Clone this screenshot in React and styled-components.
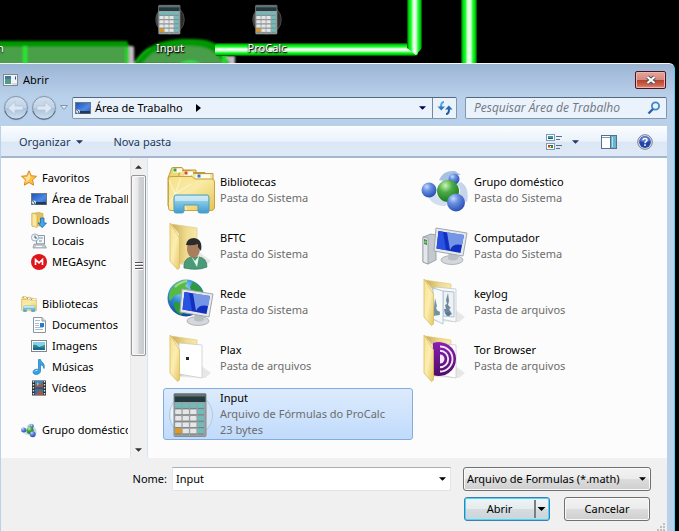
import React from "react";
import styled, { createGlobalStyle, css } from "styled-components";

const Global = createGlobalStyle`
  *, *::before, *::after { box-sizing: border-box; }
  body {
    margin: 0;
    background: #000;
    color: #000;
    font-family: "Noto Sans", "Open Sans", sans-serif;
    font-size: 11px;
    line-height: 16px;
  }
  button, input, select { font: inherit; color: inherit; margin: 0; }
  svg { display: block; flex: none; }
`;

/* ---------- page ---------- */

const Page = styled.div`
  min-height: 100vh;
  display: flex;
  flex-direction: column;
  overflow: hidden;
`;

const Desktop = styled.header`
  position: relative;
  height: 63px;
  display: flex;
  gap: 25px;
  padding-left: 134px;
  overflow: hidden;
`;

const Wallpaper = styled.svg`
  position: absolute;
  left: 0;
  top: 0;
`;

const Shortcut = styled.a`
  position: relative;
  width: 72px;
  padding-top: 3px;
  display: flex;
  flex-direction: column;
  align-items: center;
  gap: 5px;
  color: #fff;
  text-decoration: none;
  text-shadow: 0 1px 2px #000, 1px 1px 1px #000;
`;

const ClippedLabel = styled.span`
  position: absolute;
  left: -3px;
  top: 40px;
  color: #fff;
  text-shadow: 0 1px 2px #000;
`;

/* ---------- dialog frame ---------- */

const Dialog = styled.main`
  flex: 1;
  margin-right: 4px;
  padding: 0 7px 0 1px;
  display: flex;
  flex-direction: column;
  border-top: 1px solid #f4f8fc;
  border-right: 1px solid #3fd6f5;
  border-radius: 0 6px 0 0;
  background: linear-gradient(#9ab4d1, #a9c1de 14px, #b9d1ea 34px);
`;

const TitleBar = styled.div`
  height: 32px;
  padding: 0 1px 0 2px;
  display: flex;
  align-items: center;
  gap: 4px;
`;

const Title = styled.h1`
  flex: 1;
  margin: 0;
  font-size: 11px;
  font-weight: 400;
`;

const CloseButton = styled.button`
  width: 31px;
  height: 18px;
  padding: 0;
  display: grid;
  place-items: center;
  border: 1px solid #4d1420;
  border-radius: 2px;
  background: linear-gradient(#e2a59c, #d68a7e 48%, #b8402a 50%, #c9614c 80%, #dc8d7a);
  box-shadow: inset 0 0 0 1px #eab8ae;
`;

const NavRow = styled.div`
  display: flex;
  align-items: center;
  height: 24px;
`;

const NavButtons = styled.div`
  width: 71px;
  display: flex;
  align-items: center;
`;

const RoundButton = styled.button`
  width: 28px;
  height: 26px;
  padding: 0;
  border: 0;
  background: none;
`;

const HistoryButton = styled.button`
  flex: 1;
  padding: 0 0 0 3px;
  border: 0;
  background: none;
`;

const field = css`
  height: 22px;
  display: flex;
  align-items: center;
  border: 1px solid #8296ae;
  border-top-color: #56677c;
  border-radius: 2px;
  background: #eaf2fb;
`;

const AddressBar = styled.div`
  ${field}
  flex: 1;
  min-width: 0;
  padding-left: 2px;
`;

const Crumb = styled.button`
  flex: 1;
  padding: 0;
  display: flex;
  align-items: center;
  gap: 4px;
  border: 0;
  background: none;
  text-align: left;
  white-space: nowrap;
`;

const CrumbArrow = styled.span`
  padding-left: 9px;
`;

const AddressButton = styled.button`
  width: ${(p) => (p.$divided ? "24px" : "20px")};
  height: 20px;
  padding: 0;
  display: grid;
  place-items: center;
  border: 0;
  border-left: ${(p) => (p.$divided ? "1px solid #7389a3" : "0")};
  background: none;
`;

const SearchBox = styled.div`
  ${field}
  width: 202px;
  margin-left: 8px;
  padding: 0 5px 0 8px;
`;

const SearchInput = styled.input`
  flex: 1;
  min-width: 0;
  padding: 0;
  border: 0;
  outline: 0;
  background: none;
  font-family: "Open Sans", "Noto Sans", sans-serif;
  font-size: 12px;
  font-style: italic;
  &::placeholder { color: #6f7780; opacity: 1; }
`;

const IconButton = styled.button`
  padding: 0;
  border: 0;
  background: none;
`;

/* ---------- toolbar ---------- */

const Toolbar = styled.div`
  height: 32px;
  margin-top: 6px;
  padding: 0 14px 0 18px;
  display: flex;
  align-items: center;
  border-top: 1px solid #fff;
  border-bottom: 2px solid #a3b7d1;
  background: linear-gradient(#fafcff, #eaf2fb 48%, #dce7f5 52%, #dfe9f6);
  color: #1e395b;
`;

const ToolbarButton = styled.button`
  margin-right: 30px;
  padding: 0;
  display: flex;
  align-items: center;
  gap: 6px;
  border: 0;
  background: none;
`;

const ToolbarIcons = styled.div`
  margin-left: auto;
  display: flex;
  align-items: center;
  gap: 20px;
`;

const ViewButton = styled.button`
  padding: 0 2px 0 0;
  display: flex;
  align-items: center;
  gap: 10px;
  border: 0;
  background: none;
`;

/* ---------- body ---------- */

const Body = styled.div`
  height: 300px;
  display: flex;
  background: #fcfcfc;
`;

const Sidebar = styled.nav`
  width: 129px;
  padding: 9px 2px 0 0;
`;

const Group = styled.ul`
  margin: 0 0 21px;
  padding: 0;
  overflow: hidden;
  list-style: none;
`;

const Place = styled.a`
  height: 21px;
  padding-left: ${(p) => (p.$child ? "30px" : "20px")};
  display: flex;
  align-items: center;
  gap: 5px;
  color: #000;
  text-decoration: none;
  white-space: nowrap;
`;

const Scrollbar = styled.div`
  width: 18px;
  display: flex;
  flex-direction: column;
  border-left: 1px solid #e6e6e6;
  border-right: 1px solid #d6e5f5;
  padding-right: 1px;
  background: #f0f0f0;
`;

const ScrollButton = styled.button`
  height: 17px;
  padding: 0;
  display: grid;
  place-items: center;
  border: 0;
  background: none;
`;

const Thumb = styled.div`
  height: 181px;
  margin-bottom: auto;
  display: grid;
  place-items: center;
  border: 1px solid #979797;
  border-radius: 2px;
  background: linear-gradient(90deg, #f6f6f6, #e6e6e8 48%, #d2d3d6 52%, #c8c9cc);
  box-shadow: inset 0 0 0 1px #f8f8f8;
`;

const FileGrid = styled.div`
  flex: 1;
  padding: 6px 0 0 15px;
  display: grid;
  grid-template-columns: 250px 250px;
  grid-auto-rows: 52px;
  gap: 4px;
  overflow: hidden;
`;

const FileItem = styled.button`
  min-width: 0;
  padding: 0 3px;
  display: flex;
  align-items: center;
  gap: 5px;
  text-align: left;
  border: 1px solid ${(p) => (p.$selected ? "#84acdd" : "transparent")};
  border-radius: 3px;
  background: ${(p) => (p.$selected ? "linear-gradient(#dcebfc, #c1dbfc)" : "none")};
`;

const FileText = styled.span`
  display: flex;
  flex-direction: column;
  white-space: nowrap;
`;

const Detail = styled.span`
  color: #6d6d6d;
`;

/* ---------- footer ---------- */

const Footer = styled.form`
  flex: 1;
  position: relative;
  padding: 9px 16px 9px 0;
  display: flex;
  flex-direction: column;
  gap: 6px;
  background: #f0f0f0;
`;

const NameRow = styled.div`
  display: flex;
  align-items: center;
`;

const NameLabel = styled.label`
  width: 166px;
  text-align: right;
`;

const Combo = styled.div`
  flex: 1;
  min-width: 0;
  height: 24px;
  margin: 0 12px 0 5px;
  padding: 0 4px 0 3px;
  display: flex;
  align-items: center;
  border: 1px solid #e2e6ec;
  border-top-color: #abadb3;
  background: #fff;
`;

const NameInput = styled.input`
  flex: 1;
  min-width: 0;
  padding: 0;
  border: 0;
  outline: 0;
  background: none;
`;

const raised = css`
  height: 24px;
  border: 1px solid #707070;
  border-radius: 3px;
  background: linear-gradient(#f3f3f3, #ebebeb 48%, #dcdcdc 52%, #cfcfcf);
  box-shadow: inset 0 0 0 1px #fafafa;
`;

const FilterBox = styled.div`
  display: grid;
  align-items: center;
  width: 188px;
  & > * { grid-area: 1 / 1; }
  & > svg { justify-self: end; margin-right: 5px; pointer-events: none; }
`;

const FilterSelect = styled.select`
  ${raised}
  width: 100%;
  padding: 0 14px 0 3px;
  appearance: none;
`;

const ButtonRow = styled.div`
  display: flex;
  justify-content: flex-end;
  gap: 14px;
  padding-right: 1px;
`;

const SplitButton = styled.div`
  ${raised}
  width: 86px;
  display: flex;
  align-items: center;
  border-color: #3c7fb1;
  background: linear-gradient(#f0f4f6, #e6ebee 48%, #d4dce0 52%, #cbd4d9);
  box-shadow: inset 0 0 0 1px #48d8fb;
`;

const SplitMain = styled.button`
  flex: 1;
  height: 18px;
  padding: 0;
  border: 0;
  border-right: 2px solid #7c7f82;
  background: none;
`;

const SplitMenu = styled.button`
  width: 13px;
  height: 18px;
  padding: 0 0 0 1px;
  border: 0;
  background: none;
`;

const PlainButton = styled.button`
  ${raised}
  width: 86px;
  padding: 0;
`;

const Grip = styled.svg`
  position: absolute;
  right: 2px;
  bottom: 0;
`;

/* ---------- drawings ---------- */

const Triangle = ({ color = "#000", up, w = 7 }) => (
  <svg width={w} height="4" viewBox="0 0 8 4" aria-hidden="true">
    <path d={up ? "M0 4L4 0L8 4Z" : "M0 0H8L4 4Z"} fill={color} />
  </svg>
);

const DesktopArt = () => (
  <Wallpaper width="679" height="63" aria-hidden="true">
    <defs>
      <filter id="soft" x="-20%" y="-20%" width="140%" height="140%"><feGaussianBlur stdDeviation="1" /></filter>
      <linearGradient id="beam" x1="0" x2="1" y1="0" y2="0">
        <stop offset="0" stopColor="#003c00" /><stop offset=".12" stopColor="#00d80c" />
        <stop offset=".28" stopColor="#1cff2c" /><stop offset=".4" stopColor="#c8ffcc" />
        <stop offset=".5" stopColor="#f6fff6" /><stop offset=".62" stopColor="#c8ffcc" />
        <stop offset=".74" stopColor="#1cff2c" /><stop offset=".88" stopColor="#00d80c" />
        <stop offset="1" stopColor="#003c00" />
      </linearGradient>
      <linearGradient id="beamH" x1="0" x2="0" y1="0" y2="1">
        <stop offset="0" stopColor="#003c00" /><stop offset=".14" stopColor="#00d80c" />
        <stop offset=".3" stopColor="#1cff2c" /><stop offset=".42" stopColor="#c8ffcc" />
        <stop offset=".5" stopColor="#f6fff6" /><stop offset=".62" stopColor="#c8ffcc" />
        <stop offset=".74" stopColor="#1cff2c" /><stop offset=".88" stopColor="#00c80c" />
        <stop offset="1" stopColor="#003c00" />
      </linearGradient>
    </defs>
    <g filter="url(#soft)">
      <rect x="124" y="46" width="10" height="20" rx="2" fill="#c4bcc4" />
      <rect x="226" y="56" width="9" height="10" fill="#c4bcc4" />
      <path d="M-4 41H127L129 46V68H-4Z" fill="#009800" />
      <rect x="-4" y="47" width="130" height="20" fill="#4aa04a" />
      <rect x="23" y="46" width="4" height="20" fill="#22e82c" />
      <path d="M127 47V66" stroke="#1fdc26" strokeWidth="3" />
      <path d="M134 64C144 46 160 39 188 39S220 44 230 64Z" fill="#009800" />
      <path d="M142 64C152 50 164 46 186 46S214 50 224 64Z" fill="#4a9e4a" />
      <path d="M134 64C140 55 146 50 150 48" fill="none" stroke="#18c820" strokeWidth="1.500" />
      <path d="M178 64Q190 57 202 64Z" fill="#28f03c" />
      <rect x="222" y="55" width="5" height="12" fill="#1fdc26" />
    </g>
    <rect x="215" y="43" width="203" height="13" rx="3" fill="url(#beamH)" />
    <path d="M407 0H422V48L416 55L407 48Z" fill="url(#beam)" />
    <rect x="461" width="16" height="63" fill="url(#beam)" />
  </Wallpaper>
);

const CalcIcon = ({ size, dark }) => {
  const keys = [];
  for (let r = 0; r < 5; r++)
    for (let c = 0; c < 4; c++) {
      const fill = r === 4 && c === 0 ? "#e8980c" : r === 0 || c === 3 ? "#6fbcbc" : "#e6e6e6";
      const x = 8.2 + c * 7.5;
      const y = 13.2 + r * 6.4;
      keys.push(<rect key={`${r}${c}`} x={x} y={y} width="6.200" height="4.800" rx=".8" fill={fill} />);
      keys.push(<path key={`s${r}${c}`} d={`M${x} ${y + 5.2}h6.200`} stroke="#686e70" strokeWidth=".7" />);
    }
  return (
    <svg width={size} height={size} viewBox="0 0 48 48" aria-hidden="true">
      <circle cx="24" cy="25" r="21.500" fill={dark ? "#2b2b2b" : "#d4e4f6"} stroke={dark ? "#5c5c5c" : "#b3c9e0"} />
      <path d="M4 19Q8 9 14 7V43Q2 35 4 19Z" fill="#fff" opacity={dark ? 0.2 : 0.5} />
      <rect x="7" y="3.500" width="32" height="43" rx="1" fill="#9aa1a3" stroke="#858c8e" />
      <rect x="7.500" y="4" width="31" height="8" fill="#253a3e" />
      <path d="M7.500 4H38.500V6.500H7.500Z" fill="#657377" />
      {keys}
    </svg>
  );
};

const AppIcon = () => (
  <svg width="16" height="14" viewBox="0 0 16 14" aria-hidden="true">
    <rect x=".5" y="1.500" width="14" height="11" fill="#f2f4f4" stroke="#7e8a94" />
    <rect x="2" y="3" width="6" height="8" fill="#579989" />
    <path d="M2 3h6v3H2z" fill="#4677a0" />
    <path d="M12.500 3.500v3" stroke="#254aa0" />
    <path d="M9 11h5" stroke="#b9bfc4" />
  </svg>
);

const CloseGlyph = () => (
  <svg width="12" height="10" viewBox="0 0 12 10" aria-hidden="true">
    <path d="M2.500 2L9.500 8M9.500 2L2.500 8" stroke="#4b4f5c" strokeWidth="4" />
    <path d="M2.500 2L9.500 8M9.500 2L2.500 8" stroke="#fff" strokeWidth="2.200" />
  </svg>
);

const ArrowCircle = ({ flip }) => (
  <svg width="28" height="26" viewBox="0 0 28 26" aria-hidden="true">
    <defs>
      <linearGradient id={flip ? "navB" : "navA"} x1="0" x2="0" y1="0" y2="1">
        <stop offset="0" stopColor="#d4e1f0" /><stop offset=".48" stopColor="#bfd2e6" />
        <stop offset=".52" stopColor="#abc2da" /><stop offset="1" stopColor="#cfe2f4" />
      </linearGradient>
    </defs>
    <circle cx="15" cy="13" r="12.500" fill="#a9bed6" opacity=".7" />
    <circle cx="15" cy="13" r="11.500" fill={`url(#${flip ? "navB" : "navA"})`} stroke="#8698ae" />
    <path d="M4 16A11.500 11.500 0 0 0 26 16" fill="none" stroke="#56687e" />
    <path d="M6 13L13 6.500V11H21V15H13V19.500Z" transform={flip ? "translate(29 0) scale(-1 1)" : "translate(1 0)"} fill="#dde8f4" stroke="#b2c5d9" strokeWidth=".8" />
  </svg>
);

const ScreenIcon = () => (
  <svg width="16" height="16" viewBox="0 0 16 16" aria-hidden="true">
    <defs>
      <linearGradient id="scr" x1="0" x2="1" y1="0" y2="1"><stop offset="0" stopColor="#1c4fb4" /><stop offset=".6" stopColor="#4d8ae6" /><stop offset="1" stopColor="#2458bc" /></linearGradient>
    </defs>
    <rect x=".5" y="2.500" width="15" height="11" fill="url(#scr)" stroke="#6c7a88" />
    <rect x="1" y="11" width="14" height="2.500" fill="#26384e" />
    <circle cx="3" cy="11.500" r="2" fill="#dfe8f0" />
    <path d="M2 10h1v1H2z" fill="#d8452c" /><path d="M3 11h1v2H3z" fill="#2478d8" />
  </svg>
);

const RefreshIcon = () => (
  <svg width="16" height="16" viewBox="0 0 16 16" aria-hidden="true">
    <path d="M7 2C4.500 2 4 4 4 7" fill="none" stroke="#49a5dd" strokeWidth="2" />
    <path d="M0.500 6.500H8L4.300 10.500Z" fill="#287bc4" />
    <path d="M9 14C11.500 14 12 12 12 9" fill="none" stroke="#235b9f" strokeWidth="2" />
    <path d="M8 9.500H15.500L11.800 5.500Z" fill="#2469b3" />
  </svg>
);

const SearchIcon = () => (
  <svg width="14" height="14" viewBox="0 0 14 14" aria-hidden="true">
    <circle cx="8.500" cy="5" r="3.600" fill="#e8f3fc" stroke="#3f87cc" strokeWidth="1.800" />
    <path d="M6 8L1.500 12.500" stroke="#2c62a8" strokeWidth="2.400" />
  </svg>
);

const ViewIcon = () => (
  <svg width="16" height="16" viewBox="0 0 16 16" aria-hidden="true">
    <rect x=".5" y=".5" width="8" height="6" fill="#fff" stroke="#8299b5" />
    <rect x="2" y="2" width="5" height="3" fill="#3398bd" /><path d="M2 4h5v1H2z" fill="#1e634c" />
    <rect x=".5" y="9.500" width="8" height="6" fill="#fff" stroke="#8299b5" />
    <path d="M2 11h2v2H2z" fill="#d13b25" /><path d="M4 11h3v1H4z" fill="#2463c4" />
    <path d="M2 13h3v1H2z" fill="#e3bd25" /><path d="M5 12h2v2H5z" fill="#29943b" />
    <path d="M10 2.500H16M10 5.500H14M10 11.500H16M10 14.500H14" stroke="#566d8b" />
  </svg>
);

const PaneIcon = () => (
  <svg width="16" height="14" viewBox="0 0 16 14" aria-hidden="true">
    <rect x=".5" y=".5" width="15" height="13" fill="#fff" stroke="#586f8c" />
    <path d="M1 2.500H15" stroke="#8196af" />
    <rect x="10" y="1" width="5" height="12" fill="#68b5d1" />
    <path d="M11 2H12V12H11Z" fill="#b4e3f0" /><path d="M9.500 1V13" stroke="#586f8c" />
  </svg>
);

const HelpIcon = () => (
  <svg width="16" height="16" viewBox="0 0 16 16" aria-hidden="true">
    <circle cx="8" cy="8" r="7.300" fill="#e6e8ee" stroke="#777e8d" />
    <circle cx="8" cy="8" r="5.900" fill="#2445a8" />
    <path d="M3 7A5 5 0 0 1 13 7Q8 9 3 7Z" fill="#6d8fdc" opacity=".7" />
    <path d="M6 6.300C6 3.700 10 3.900 10 6C10 7.400 8 7.500 8 9.300" fill="none" stroke="#fff" strokeWidth="1.500" />
    <rect x="7.200" y="10.300" width="1.600" height="1.600" fill="#fff" />
  </svg>
);

const StarIcon = () => (
  <svg width="16" height="16" viewBox="0 0 16 16" aria-hidden="true">
    <path d="M8 .8L10.200 5.700L15.500 6.300L11.500 9.900L12.700 15.200L8 12.500L3.300 15.200L4.500 9.900L.5 6.300L5.800 5.700Z" fill="#fcc24c" stroke="#dd8620" />
    <path d="M8 3L9.400 7L8 10L4 12.500L5.500 9L3 7H6.500Z" fill="#ffe69c" />
  </svg>
);

const DownloadIcon = () => (
  <svg width="16" height="16" viewBox="0 0 16 16" aria-hidden="true">
    <path d="M1 1.500L8 .5L12 1.500V14H1Z" fill="#e4c25e" stroke="#c8a646" strokeWidth=".7" />
    <path d="M1 1L6 2.500V15.500L1 14Z" fill="#fae99c" stroke="#cdae53" strokeWidth=".7" />
    <path d="M9.500 6H13V11H15.500L11.200 15.700L7 11H9.500Z" fill="#43a8e8" stroke="#1c68b0" strokeWidth=".8" />
  </svg>
);

const RecentIcon = () => (
  <svg width="16" height="16" viewBox="0 0 16 16" aria-hidden="true">
    <path d="M5.500 2.500H13.500V11H5.500Z" fill="#f4f7f9" stroke="#8b969e" />
    <path d="M3 11H13L15.500 15H2Z" fill="#c4cacf" stroke="#8b9499" strokeWidth=".7" />
    <circle cx="4" cy="4.500" r="3.600" fill="#eef4f8" stroke="#9fb0bb" />
    <path d="M4 2.500V5H6" fill="none" stroke="#41576a" /><path d="M8 5h4M8 8h3" stroke="#5d9dbc" />
    <path d="M5 13.500H11" stroke="#fff" />
  </svg>
);

const MegaIcon = () => (
  <svg width="16" height="16" viewBox="0 0 16 16" aria-hidden="true">
    <circle cx="8" cy="8" r="8" fill="#df151b" />
    <path d="M4.500 11V5.500L8 8.800L11.500 5.500V11" fill="none" stroke="#fff" strokeWidth="1.600" />
  </svg>
);

const LibraryIcon = ({ size }) => (
  <svg width={size} height={size} viewBox="0 0 48 48" aria-hidden="true">
    <defs>
      <linearGradient id="libF" x1="0" x2="1" y1="0" y2="1"><stop offset="0" stopColor="#f6e08b" /><stop offset=".45" stopColor="#f9eba6" /><stop offset="1" stopColor="#e8c452" /></linearGradient>
      <linearGradient id="libB" x1="0" x2="0" y1="0" y2="1"><stop offset="0" stopColor="#b4e2f2" /><stop offset="1" stopColor="#3d9bd0" /></linearGradient>
    </defs>
    <path d="M4 4Q4 1.500 6 1.500H15L17 4H29V40H1V12Z" fill="#f0d775" stroke="#bd9b38" />
    <path d="M12 8L14 4.500H24L26 6.500H38V40H10Z" fill="#f4df88" stroke="#bd9b38" />
    <path d="M24 10L27 7.500H46V20H24Z" fill="#f7e7a1" stroke="#bd9b38" />
    <rect x="6" y="2.500" width="9" height="4" fill="#fffef4" /><rect x="6.500" y="2.500" width="3" height="3" fill="#34a044" />
    <rect x="17" y="5.500" width="9" height="4" fill="#fffef4" /><rect x="17.500" y="5.500" width="3" height="3" fill="#df4526" />
    <rect x="29" y="8.500" width="14" height="4" fill="#fffef4" /><rect x="30.500" y="8.500" width="3" height="3" fill="#2b78cc" />
    <path d="M1.500 13Q1.500 10.500 4 10.500H25L28 13H45Q47.500 13 47.500 16V42Q47 44.500 44 44.500H4Q1.500 44.500 1.500 42Z" fill="url(#libF)" stroke="#c8a440" />
    <path d="M8 28L2 14M8 28L14 12M8 28L24 18M8 28L2 38M8 28L20 44" stroke="#fffbe0" strokeWidth="1.200" opacity=".6" />
    <path d="M7 31Q7 29 9 29H40Q42 29 42 31V45Q42 47 40 47H33Q31 47 31 45V39H17V45Q17 47 15 47H9Q7 47 7 45Z" fill="url(#libB)" stroke="#4e9fbc" />
    <path d="M8 30H41V35H8Z" fill="#dff5fa" opacity=".6" />
  </svg>
);

const DocumentIcon = () => (
  <svg width="16" height="16" viewBox="0 0 16 16" aria-hidden="true">
    <path d="M2.500 .5H11L14.500 4V15.500H2.500Z" fill="#fff" stroke="#8d959c" />
    <path d="M11 .5V4H14.500" fill="#d8dee2" stroke="#8d959c" />
    <path d="M4 3.500H9M4 6.500H8M4 8.500H8M4 10.500H12M4 12.500H12" stroke="#a9bcd4" />
    <rect x="9" y="6" width="4" height="4" fill="#287bc9" />
  </svg>
);

const PictureIcon = () => (
  <svg width="16" height="16" viewBox="0 0 16 16" aria-hidden="true">
    <rect x=".5" y="2.500" width="15" height="11" fill="#fff" stroke="#7f868c" />
    <rect x="2" y="4" width="12" height="8" fill="#84cef0" />
    <path d="M2 7Q5 6 8 9L14 7V12H2Z" fill="#2b8d78" /><path d="M2 10Q8 8 14 11V12H2Z" fill="#1a64a2" />
  </svg>
);

const MusicIcon = () => (
  <svg width="16" height="16" viewBox="0 0 16 16" aria-hidden="true">
    <path d="M7.500 .5H9.500C10 3.500 14.500 4 13 9.500C12.500 7 11.500 6 9.500 6V12C9.500 14 7.500 15.500 5.200 15.500C1 15.500 1 10.500 5.500 10.200L7.500 10.500Z" fill="#35a2e4" stroke="#2478b8" strokeWidth=".7" />
    <path d="M3.500 12.500Q4.500 11 6.500 11.500" stroke="#a9dcf8" fill="none" />
  </svg>
);

const VideoIcon = () => (
  <svg width="16" height="16" viewBox="0 0 16 16" aria-hidden="true">
    <rect x="1" y=".5" width="14" height="15" fill="#2c3236" />
    <rect x="4" y="1" width="8" height="6.500" fill="#4187be" /><rect x="4" y="8.500" width="8" height="6.500" fill="#386fa8" />
    <path d="M4 5L7 3L9 5L12 2V7H4ZM5 15L8 10L12 12V15Z" fill="#a05a42" /><path d="M6 2L8 4L6 6Z" fill="#82c8e4" />
    <path d="M2.500 1V15M13.500 1V15" stroke="#dfe4e6" strokeWidth="1.400" strokeDasharray="1.500 1.500" />
  </svg>
);

const HomeGroupIcon = ({ size }) => (
  <svg width={size} height={size} viewBox="0 0 48 48" aria-hidden="true">
    <defs>
      <radialGradient id="hgB" cx=".35" cy=".28" r=".8"><stop offset="0" stopColor="#c4daff" /><stop offset=".35" stopColor="#6a90e0" /><stop offset="1" stopColor="#2046b0" /></radialGradient>
      <radialGradient id="hgG" cx=".38" cy=".25" r=".8"><stop offset="0" stopColor="#cdf4b9" /><stop offset=".4" stopColor="#4bab43" /><stop offset="1" stopColor="#16721e" /></radialGradient>
    </defs>
    <path d="M5 24Q8 40 24 40L30 36Q17 36 14 25Z" fill="#b4c9e6" opacity=".6" />
    <path d="M18 14Q22 4 34 5L40 9Q30 8 27 16Z" fill="#86a8d4" opacity=".7" />
    <path d="M40 16Q49 22 46 36L36 32Q42 24 36 18Z" fill="#a2badd" opacity=".6" />
    <circle cx="33" cy="13" r="5.500" fill="url(#hgB)" />
    <circle cx="8" cy="24" r="7.500" fill="url(#hgB)" />
    <circle cx="27" cy="25" r="11" fill="url(#hgG)" />
    <circle cx="35" cy="36.500" r="9" fill="url(#hgB)" />
  </svg>
);

const Monitor = () => (
  <g>
    <ellipse cx="31" cy="43" rx="11" ry="4.500" fill="#d4d8dc" stroke="#999fa5" strokeWidth=".7" />
    <path d="M28 33H36L37 42Q32 45 27 42Z" fill="#b9bec3" />
    <path d="M15 11L46 16L42 39L13 34Z" fill="#e6e9ec" stroke="#a2a8ae" />
    <path d="M17.500 14L43 18L39.500 36L15.500 31.500Z" fill="#1230c0" />
    <path d="M26 15.300L43 18L41 28Q32 26 29 33Z" fill="#8fb0f0" opacity=".8" />
    <path d="M17.500 14L22 14.700L25 33L15.500 31.500Z" fill="#2a52e0" />
  </g>
);

const ComputerIcon = () => (
  <svg width="48" height="48" viewBox="0 0 48 48" aria-hidden="true">
    <path d="M2 15L10 12L15 13V38L7 42L2 40Z" fill="#c4c9ce" stroke="#8d949b" strokeWidth=".8" />
    <path d="M2 15L7 16V42L2 40Z" fill="#e4e8eb" stroke="#8d949b" strokeWidth=".7" />
    <path d="M3 17L6 18V23L3 22Z" fill="#5c6870" /><circle cx="4.500" cy="20" r="1.500" fill="#62d847" />
    <g transform="translate(0 -5)"><Monitor /></g>
  </svg>
);

const NetworkIcon = () => (
  <svg width="48" height="48" viewBox="0 0 48 48" aria-hidden="true">
    <defs><radialGradient id="earth" cx=".4" cy=".25" r=".8"><stop offset="0" stopColor="#aee6ff" /><stop offset=".45" stopColor="#318bd5" /><stop offset="1" stopColor="#0e3f91" /></radialGradient></defs>
    <circle cx="19" cy="20" r="18.500" fill="url(#earth)" />
    <path d="M10 5Q16 1 21 3L18 8L22 11L14 16L8 17L3 23Q-1 14 10 5Z" fill="#57ba43" />
    <path d="M26 4Q34 8 36 15L30 13L26 16L23 9ZM7 24L16 25L20 31L14 37Q6 33 7 24Z" fill="#2f9a38" />
    <path d="M8 9Q13 4 20 3" stroke="#d7f5ac" strokeWidth="2" fill="none" opacity=".6" />
    <Monitor />
  </svg>
);

const FolderIcon = ({ children }) => (
  <svg width="48" height="48" viewBox="0 0 48 48" aria-hidden="true">
    <defs>
      <linearGradient id="fFront" x1="0" x2="1" y1="0" y2="1"><stop offset="0" stopColor="#f6e08c" /><stop offset=".5" stopColor="#fbeeb0" /><stop offset="1" stopColor="#e6c664" /></linearGradient>
      <linearGradient id="fBack" x1="0" x2="1" y1="0" y2="0"><stop offset="0" stopColor="#c9aa55" /><stop offset=".6" stopColor="#f0dc90" /><stop offset="1" stopColor="#f8e9a8" /></linearGradient>
    </defs>
    <path d="M12 43L38 44L44 39L32 30Z" fill="#989898" opacity=".2" />
    <path d="M4 2L30 6V37L12 42V12Z" fill="url(#fBack)" stroke="#dcc478" strokeWidth=".6" />
    {children}
    <path d="M3 1L12.500 16V46L10.500 47.500L3 39Z" fill="url(#fFront)" stroke="#d9bc66" strokeWidth=".8" />
  </svg>
);

const Paper = () => <path d="M12 9L35 11V44L12 40Z" fill="#fff" stroke="#c9cccf" strokeWidth=".8" />;

const UserFolder = () => (
  <FolderIcon>
    <path d="M17 46Q16 37 24 35H32Q40 36 40 45Q31 49 17 46Z" fill="#4a9c78" stroke="#337b5d" strokeWidth=".7" />
    <path d="M24 34L28 39L32 34L30 45Z" fill="#edf4f0" />
    <ellipse cx="26.500" cy="27" rx="6.500" ry="9" fill="#a87e5d" />
    <path d="M19 23Q20 16 27 16Q36 17 34 29L31 25V22Q25 24 19 23Z" fill="#292b2d" />
  </FolderIcon>
);

const KeylogFolder = () => (
  <FolderIcon>
    <path d="M14 9L35 11V44L14 40Z" fill="#f8fafb" stroke="#c0c9d2" strokeWidth=".8" />
    <path d="M22 13L33 14V39L22 38Z" fill="#edf2f4" stroke="#aebfcf" />
    <path d="M24 36L23 31L25 31L24 27L26 26L25 22L27 15L28 23L27 27L30 30L28 31L31 36L28 38Z" fill="#70879a" />
    <path d="M12 10L22 13V46L12 41Z" fill="#f7fafb" stroke="#b8c6d4" />
    <path d="M12 38L14 20L16 28L15 30L19 37Z" fill="#7993a3" />
    <circle cx="27" cy="36" r="2" fill="#4d7da5" /><circle cx="17" cy="35" r="2" fill="#6e9696" />
  </FolderIcon>
);

const PlaxFolder = () => (
  <FolderIcon><Paper /><rect x="19" y="23" width="3" height="3" fill="#202c2d" /></FolderIcon>
);

const TorFolder = () => (
  <FolderIcon>
    <defs>
      <linearGradient id="onion" x1="0" x2="0" y1="0" y2="1"><stop offset="0" stopColor="#8c1fb4" /><stop offset="1" stopColor="#4c0d68" /></linearGradient>
    </defs>
    <Paper />
    <path d="M12 9.100A17 17 0 1 1 12 40.900Z" fill="url(#onion)" />
    <path d="M19 12.500A12.500 12.500 0 0 1 19 37.500M19 16.800A8.200 8.200 0 0 1 19 33.200" fill="none" stroke="#f4e8f7" strokeWidth="1.900" />
    <path d="M19 20.500A4.500 4.500 0 0 1 19 29.500Z" fill="#f4e8f7" />
  </FolderIcon>
);

/* ---------- content ---------- */

const groups = [
  ["Favoritos", <StarIcon />, [
    ["Área de Trabalho", <ScreenIcon />], ["Downloads", <DownloadIcon />],
    ["Locais", <RecentIcon />], ["MEGAsync", <MegaIcon />],
  ]],
  ["Bibliotecas", <LibraryIcon size={16} />, [
    ["Documentos", <DocumentIcon />], ["Imagens", <PictureIcon />],
    ["Músicas", <MusicIcon />], ["Vídeos", <VideoIcon />],
  ]],
  ["Grupo doméstico", <HomeGroupIcon size={16} />, []],
];

const files = [
  ["Bibliotecas", ["Pasta do Sistema"], <LibraryIcon size={48} />],
  ["Grupo doméstico", ["Pasta do Sistema"], <HomeGroupIcon size={48} />],
  ["BFTC", ["Pasta do Sistema"], <UserFolder />],
  ["Computador", ["Pasta do Sistema"], <ComputerIcon />],
  ["Rede", ["Pasta do Sistema"], <NetworkIcon />],
  ["keylog", ["Pasta de arquivos"], <KeylogFolder />],
  ["Plax", ["Pasta de arquivos"], <PlaxFolder />],
  ["Tor Browser", ["Pasta de arquivos"], <TorFolder />],
  ["Input", ["Arquivo de Fórmulas do ProCalc", "23 bytes"], <CalcIcon size={48} />],
];

export default function App() {
  const [selected, setSelected] = React.useState("Input");
  const [name, setName] = React.useState("Input");
  const pick = (file) => { setSelected(file); setName(file); };

  return (
    <Page>
      <Global />
      <Desktop>
        <DesktopArt />
        <ClippedLabel>n</ClippedLabel>
        <Shortcut href="#input"><CalcIcon size={32} dark />Input</Shortcut>
        <Shortcut href="#procalc"><CalcIcon size={32} dark />ProCalc</Shortcut>
      </Desktop>

      <Dialog>
        <TitleBar>
          <AppIcon />
          <Title>Abrir</Title>
          <CloseButton aria-label="Fechar"><CloseGlyph /></CloseButton>
        </TitleBar>

        <NavRow>
          <NavButtons>
            <RoundButton aria-label="Voltar"><ArrowCircle /></RoundButton>
            <RoundButton aria-label="Avançar"><ArrowCircle flip /></RoundButton>
            <HistoryButton aria-label="Páginas recentes">
              <svg width="8" height="6" viewBox="0 0 8 6"><path d="M.5 .5H7.500L4 4.500Z" fill="#dbe8f5" stroke="#8298b2" /></svg>
            </HistoryButton>
          </NavButtons>
          <AddressBar>
            <Crumb>
              <ScreenIcon />
              Área de Trabalho
              <CrumbArrow><svg width="5" height="8" viewBox="0 0 5 8"><path d="M0 0L5 4L0 8Z" /></svg></CrumbArrow>
            </Crumb>
            <AddressButton aria-label="Locais anteriores"><Triangle color="#00004c" /></AddressButton>
            <AddressButton $divided aria-label="Atualizar"><RefreshIcon /></AddressButton>
          </AddressBar>
          <SearchBox>
            <SearchInput aria-label="Pesquisar" placeholder="Pesquisar Área de Trabalho" />
            <IconButton aria-label="Buscar"><SearchIcon /></IconButton>
          </SearchBox>
        </NavRow>

        <Toolbar>
          <ToolbarButton>Organizar <Triangle color="#1e395b" /></ToolbarButton>
          <ToolbarButton>Nova pasta</ToolbarButton>
          <ToolbarIcons>
            <ViewButton aria-label="Modo de exibição"><ViewIcon /><Triangle color="#1e395b" /></ViewButton>
            <IconButton aria-label="Painel de visualização"><PaneIcon /></IconButton>
            <IconButton aria-label="Ajuda"><HelpIcon /></IconButton>
          </ToolbarIcons>
        </Toolbar>

        <Body>
          <Sidebar>
            {groups.map(([label, icon, children]) => (
              <Group key={label}>
                <li><Place href="#">{icon}{label}</Place></li>
                {children.map(([child, childIcon]) => (
                  <li key={child}><Place $child href="#">{childIcon}{child}</Place></li>
                ))}
              </Group>
            ))}
          </Sidebar>
          <Scrollbar>
            <ScrollButton aria-label="Rolar para cima"><Triangle up color="#333" /></ScrollButton>
            <Thumb>
              <svg width="8" height="8" viewBox="0 0 8 8"><path d="M0 .5H8M0 3.500H8M0 6.500H8" stroke="#555" /><path d="M0 1.500H8M0 4.500H8M0 7.500H8" stroke="#fff" /></svg>
            </Thumb>
            <ScrollButton aria-label="Rolar para baixo"><Triangle color="#333" /></ScrollButton>
          </Scrollbar>
          <FileGrid>
            {files.map(([file, details, icon]) => (
              <FileItem key={file} $selected={file === selected} onClick={() => pick(file)}>
                {icon}
                <FileText>
                  <span>{file}</span>
                  {details.map((d) => <Detail key={d}>{d}</Detail>)}
                </FileText>
              </FileItem>
            ))}
          </FileGrid>
        </Body>

        <Footer onSubmit={(e) => e.preventDefault()}>
          <NameRow>
            <NameLabel htmlFor="file-name">Nome:</NameLabel>
            <Combo>
              <NameInput id="file-name" value={name} onChange={(e) => setName(e.target.value)} />
              <IconButton type="button" aria-label="Nomes recentes"><Triangle /></IconButton>
            </Combo>
            <FilterBox>
              <FilterSelect aria-label="Tipo de arquivo"><option>Arquivo de Formulas (*.math)</option></FilterSelect>
              <Triangle />
            </FilterBox>
          </NameRow>
          <ButtonRow>
            <SplitButton>
              <SplitMain type="submit">Abrir</SplitMain>
              <SplitMenu type="button" aria-label="Opções de abertura"><Triangle w={9} /></SplitMenu>
            </SplitButton>
            <PlainButton type="button">Cancelar</PlainButton>
          </ButtonRow>
          <Grip width="8" height="8" viewBox="0 0 8 8" aria-hidden="true">
            <path d="M6 0h2v2H6zM3 3h2v2H3zM6 3h2v2H6zM0 6h2v2H0zM3 6h2v2H3zM6 6h2v2H6z" fill="#bfbfbf" />
          </Grip>
        </Footer>
      </Dialog>
    </Page>
  );
}
